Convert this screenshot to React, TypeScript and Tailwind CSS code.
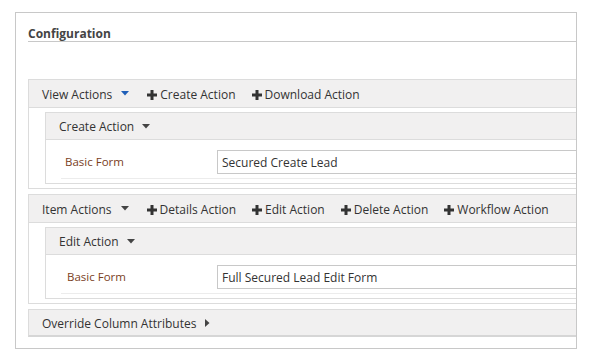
import React from 'react';

const font = { fontFamily: '"Open Sans", "Noto Sans", sans-serif' };

const Plus = () => (
  <svg width="10" height="10" viewBox="0 0 10 10" className="mr-[3px] shrink-0">
    <rect x="3.5" y="0" width="3" height="10" fill="#333" />
    <rect x="0" y="3.5" width="10" height="3" fill="#333" />
  </svg>
);

const CaretDown = ({ color = '#444' }: { color?: string }) => (
  <svg width="8" height="5" viewBox="0 0 8 5" className="shrink-0">
    <path d="M0 0 L8 0 L4 4.5 Z" fill={color} />
  </svg>
);

const CaretRight = () => (
  <svg width="5" height="8" viewBox="0 0 5 8" className="shrink-0">
    <path d="M0 0 L4.5 4 L0 8 Z" fill="#444" />
  </svg>
);

const ActionLink = ({ label, className = '' }: { label: string; className?: string }) => (
  <span className={`flex items-center whitespace-nowrap ${className}`}>
    <Plus />
    <span>{label}</span>
  </span>
);

const FormPanel = ({ title, value, labelPad }: { title: string; value: string; labelPad: string }) => (
  <div className="ml-[16px] mt-[4px] border border-[#dcdcdc]">
    <div className="h-[27px] bg-[#f1f0f0] border-b border-[#dcdcdc] flex items-center pl-[13px] pt-[2px] text-[#333]">
      <span>{title}</span>
      <span className="ml-[8px] mb-[2px]">
        <CaretDown />
      </span>
    </div>
    <div className="pl-[15px] pb-[4px]">
      <div className="flex items-center pt-[10px] pb-[4px] border-b border-[#ececec]">
        <span className={`w-[156px] ${labelPad} text-[11.5px] text-[#7a3e1d]`}>Basic Form</span>
        <div className="w-[400px] h-[24px] border border-[#c8c8c8] bg-white flex items-center pl-[4px] pt-[1px] text-[#333]">
          {value}
        </div>
      </div>
    </div>
  </div>
);

export default function App() {
  return (
    <div className="w-[590px] h-[362px] bg-white pt-[12px] pl-[15px] text-[12px]" style={font}>
      <div className="w-[562px] h-[337px] border border-[#c8c8c8] overflow-hidden pl-[12px]">
        <div className="h-[29px] pt-[13px] border-b border-[#c8c8c8]">
          <span className="block font-bold text-[#444] leading-[15px]">Configuration</span>
        </div>

        <div className="w-[600px] mt-[37px]">
          <div className="border border-[#dcdcdc] pb-[4px]">
            <div className="h-[28px] bg-[#f1f0f0] border-b border-[#dcdcdc] flex items-center pl-[13px] pt-[2px] text-[#333]">
              <span>View Actions</span>
              <span className="ml-[9px] mb-[2px]">
                <CaretDown color="#1f5fb8" />
              </span>
              <ActionLink label="Create Action" className="ml-[18px]" />
              <ActionLink label="Download Action" className="ml-[16px]" />
            </div>
            <FormPanel title="Create Action" value="Secured Create Lead" labelPad="pl-[4px]" />
          </div>

          <div className="border border-[#dcdcdc] pb-[4px] mt-[5px]">
            <div className="h-[28px] bg-[#f1f0f0] border-b border-[#dcdcdc] flex items-center pl-[13px] pt-[2px] text-[#333]">
              <span>Item Actions</span>
              <span className="ml-[9px] mb-[2px]">
                <CaretDown />
              </span>
              <ActionLink label="Details Action" className="ml-[18px]" />
              <ActionLink label="Edit Action" className="ml-[16px]" />
              <ActionLink label="Delete Action" className="ml-[16px]" />
              <ActionLink label="Workflow Action" className="ml-[16px]" />
            </div>
            <FormPanel title="Edit Action" value="Full Secured Lead Edit Form" labelPad="pl-[6px]" />
          </div>

          <div className="mt-[5px] h-[28px] bg-[#f1f0f0] border border-[#dcdcdc] border-b-[2px] border-b-[#d6d6d6] flex items-center pl-[13px] pt-[2px] text-[#333]">
            <span>Override Column Attributes</span>
            <span className="ml-[9px] mb-[2px]">
              <CaretRight />
            </span>
          </div>
        </div>
      </div>
    </div>
  );
}
